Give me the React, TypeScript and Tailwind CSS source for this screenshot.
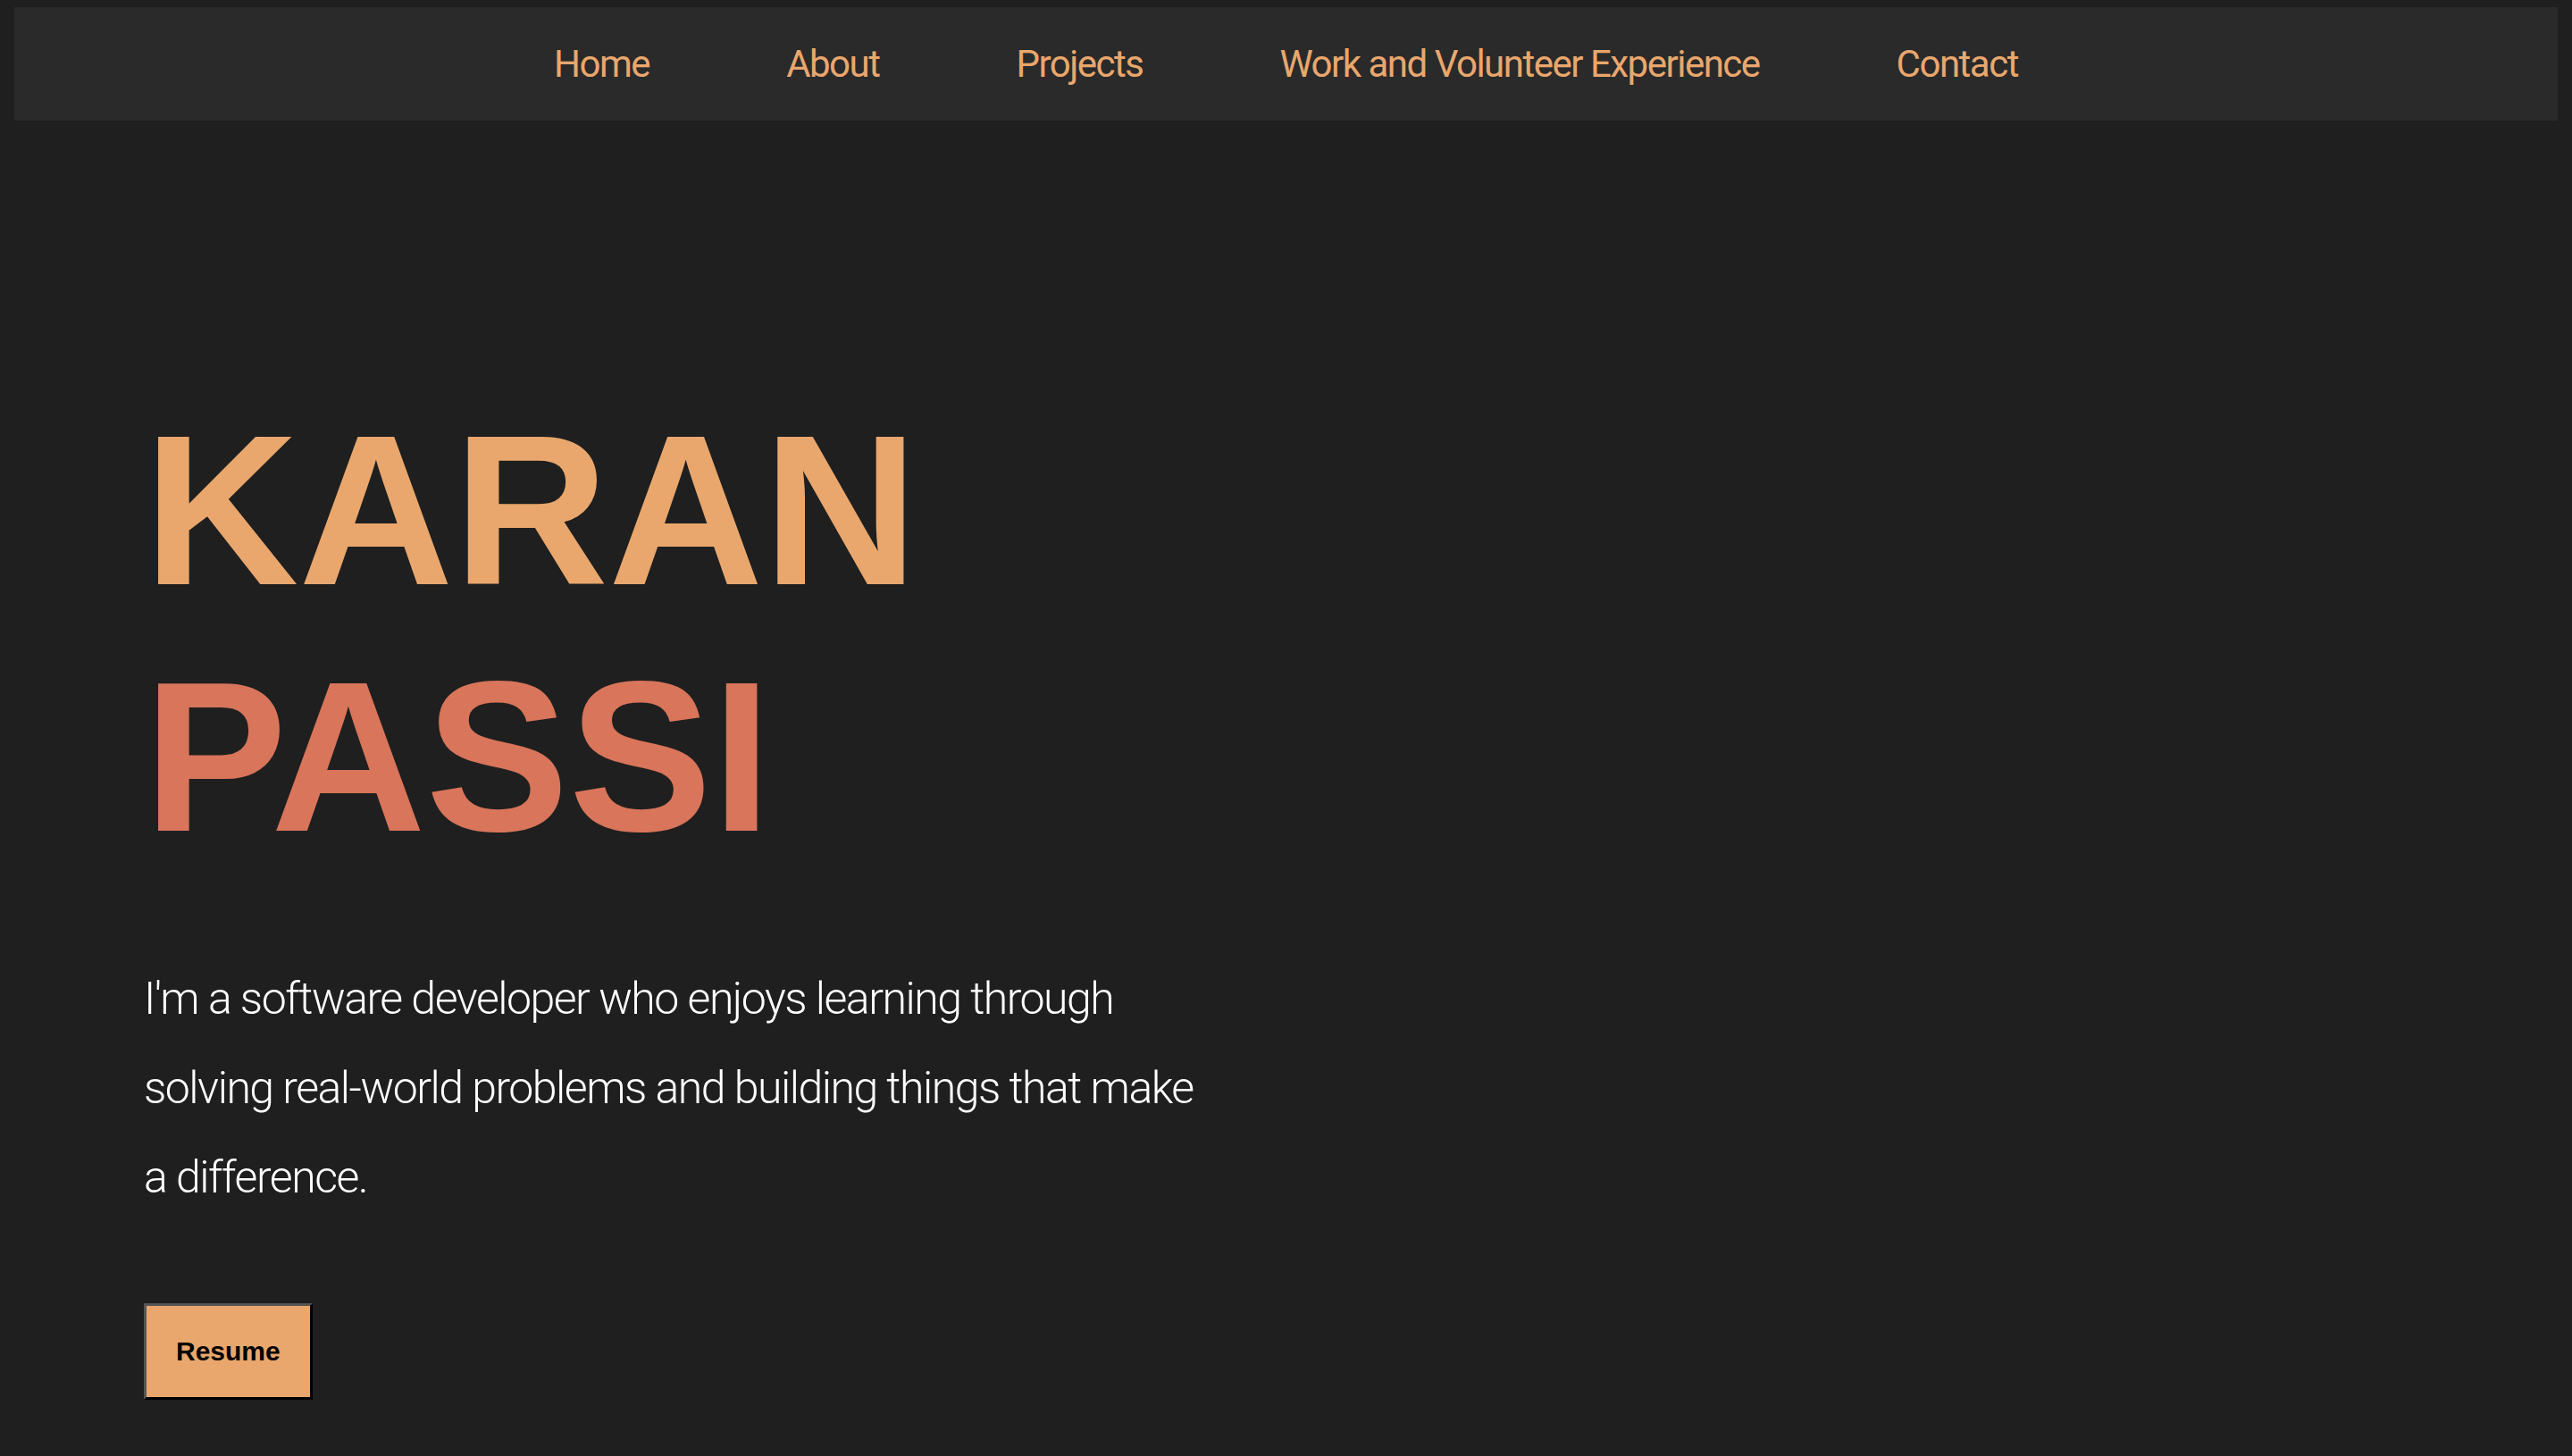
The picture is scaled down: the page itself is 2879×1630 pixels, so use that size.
import React from "react";

export default function App() {
  const links = ["Home", "About", "Projects", "Work and Volunteer Experience", "Contact"];
  return (
    <div className="min-h-screen w-full bg-[#1f1f1f] pt-2">
      <nav className="mx-4 flex h-[127px] items-center justify-center gap-[153px] bg-[#2a2a2a] font-['Roboto',sans-serif] text-[42px] tracking-[-1.5px] text-[#e9a76d]">
        {links.map((l) => (
          <a key={l} href="#" className="leading-none">
            {l}
          </a>
        ))}
      </nav>
      <main className="pl-[161px] pt-[298px]">
        <h1 className="font-['Liberation_Sans',Arial,sans-serif] text-[240px] font-bold leading-[276px]">
          <span className="block text-[#e9a76d]">KARAN</span>
          <span className="block text-[#d8755a]">PASSI</span>
        </h1>
        <p className="mt-[83px] w-[1200px] font-['Roboto',sans-serif] text-[50px] font-light leading-[100px] tracking-[-1.5px] text-white">
          I'm a software developer who enjoys learning through solving real-world problems and building things that make a difference.
        </p>
        <button className="mt-[91px] border-[3px] border-b-black border-l-[#555] border-r-black border-t-[#555] bg-[#e9a76d] px-[33px] py-[34px] font-['Liberation_Sans',Arial,sans-serif] text-[30px] font-bold leading-[34px] text-black">
          Resume
        </button>
      </main>
    </div>
  );
}
